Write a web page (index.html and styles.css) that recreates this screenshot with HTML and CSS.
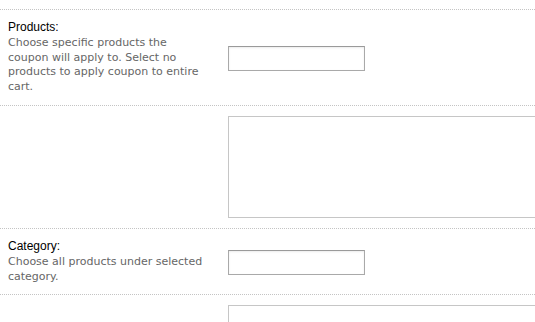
FILE: index.html
```html
<!DOCTYPE html>
<html>
<head>
<meta charset="utf-8">
<link rel="stylesheet" href="styles.css">
</head>
<body>
<div class="form">
  <div class="row">
    <div class="info">
      <div class="label">Products:</div>
      <div class="desc">Choose specific products the coupon will apply to. Select no products to apply coupon to entire cart.</div>
    </div>
    <div class="field"><input class="text-input" type="text"></div>
  </div>
  <div class="row">
    <div class="info"></div>
    <div class="field"><textarea class="area"></textarea></div>
  </div>
  <div class="row">
    <div class="info">
      <div class="label">Category:</div>
      <div class="desc">Choose all products under selected category.</div>
    </div>
    <div class="field"><input class="text-input" type="text"></div>
  </div>
  <div class="row">
    <div class="info"></div>
    <div class="field"><textarea class="area"></textarea></div>
  </div>
</div>
</body>
</html>
```
FILE: styles.css
```css
html, body {
  margin: 0;
  padding: 0;
  background: #fff;
  overflow: hidden;
}
body {
  width: 535px;
  height: 322px;
}
.form {
  margin-top: 9px;
  width: 535px;
  height: 313px;
  overflow: hidden;
}
.row {
  display: grid;
  grid-template-columns: 200px 1fr;
  column-gap: 20px;
  padding: 10px 0 10px 8px;
  border-top: 1px dotted #c4c4c4;
}
.label {
  font-family: "Liberation Sans", Arial, sans-serif;
  font-size: 12px;
  line-height: 14px;
  color: #000;
  margin-bottom: 2px;
}
.desc {
  font-family: "DejaVu Sans", Verdana, sans-serif;
  font-size: 11px;
  line-height: 14.7px;
  color: #666;
}
.field {
  display: flex;
  align-items: center;
  padding-top: 2px;
}
.text-input {
  box-sizing: border-box;
  width: 137px;
  height: 25px;
  margin: 0;
  padding: 2px 4px;
  border: 1px solid #a9a9a9;
  border-top-color: #9a9a9a;
  box-shadow: inset 0 1px 2px rgba(0, 0, 0, 0.08);
  background: #fff;
  outline: none;
}
.area {
  display: block;
  box-sizing: border-box;
  width: 420px;
  height: 102px;
  margin: -2px 0 0;
  padding: 2px;
  border: 1px solid #c6c6c6;
  background: #fff;
  resize: none;
  outline: none;
}
```
